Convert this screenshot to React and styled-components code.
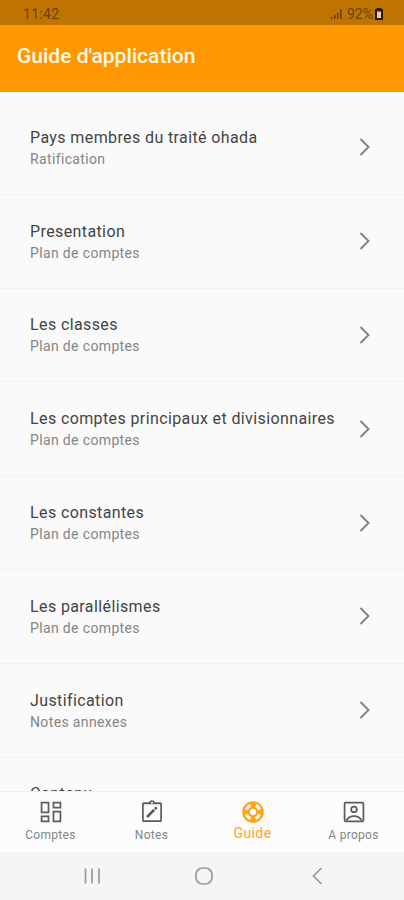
import styled, { createGlobalStyle } from 'styled-components'
import { MdOutlineSupport } from 'react-icons/md'

const topics = [
  { title: 'Pays membres du traité ohada', text: 'Ratification' },
  { title: 'Presentation', text: 'Plan de comptes' },
  { title: 'Les classes', text: 'Plan de comptes' },
  { title: 'Les comptes principaux et divisionnaires', text: 'Plan de comptes' },
  { title: 'Les constantes', text: 'Plan de comptes' },
  { title: 'Les parallélismes', text: 'Plan de comptes' },
  { title: 'Justification', text: 'Notes annexes' },
  { title: 'Contenu', text: 'Notes annexes' },
]

const BoardIcon = () => (
  <svg viewBox="0 0 24 24" fill="none" stroke="currentColor" strokeWidth="1.6">
    <path d="M3.300 3.300h6.400v9h-6.400zM14.300 3.300h6.400v4.700h-6.400zM3.300 16h6.400v4.700h-6.400zM14.300 11.700h6.400v9h-6.400z" />
  </svg>
)

const NotesIcon = () => (
  <svg viewBox="0 0 24 24" fill="currentColor">
    <path
      fillRule="evenodd"
      d="M19.500 3h-4.700a3 3 0 0 0-5.600 0H4.500A1.700 1.700 0 0 0 2.800 4.700v14.800a1.700 1.700 0 0 0 1.700 1.700h15a1.700 1.700 0 0 0 1.700-1.700V4.700A1.700 1.700 0 0 0 19.500 3zM12 2.500a.9.900 0 1 1 0 1.800.9.900 0 0 1 0-1.800zM4.400 4.800h15.200v14.800H4.400z"
    />
    <path d="M7 15.300V17h1.700l6.200-6.200-1.700-1.700zM16.800 8.900a.6.600 0 0 0 0-.8l-.9-.9a.6.600 0 0 0-.8 0l-1.200 1.200 1.700 1.700z" />
  </svg>
)

const AccountIcon = () => (
  <svg viewBox="0 0 24 24" fill="none" stroke="currentColor" strokeWidth="1.6">
    <rect x="3.300" y="3.300" width="17.400" height="17.400" rx="1" />
    <circle cx="12" cy="9.600" r="2.600" />
    <path d="M5 19.800c1.400-2.700 4-4 7-4s5.600 1.300 7 4" />
  </svg>
)

const tabs = [
  { label: 'Comptes', icon: <BoardIcon /> },
  { label: 'Notes', icon: <NotesIcon /> },
  { label: 'Guide', icon: <MdOutlineSupport />, active: true },
  { label: 'A propos', icon: <AccountIcon /> },
]

const App = () => {
  return (
    <Screen>
      <GlobalStyle />
      <StatusBar>
        <span>11:42</span>
        <Status>
          <svg width="12" height="12" viewBox="0 0 12 12" fill="currentColor">
            <path d="M0 9h1.500v2H0zM3 7h1.500v4H3zM6 4.500h1.500v6.500H6zM9 1h1.500v10H9z" />
          </svg>
          <span>92%</span>
          <svg width="8" height="12" viewBox="0 0 8 12">
            <path d="M2.500 1h3v1H7v9H1V2h1.500z" fill="#e5d0ae" stroke="#2b1a00" strokeWidth="2" />
            <path d="M2 1h4v2.500H2z" fill="#2b1a00" />
          </svg>
        </Status>
      </StatusBar>
      <Header>
        <h1>Guide d'application</h1>
      </Header>

      <TopicList>
        {topics.map((topic) => (
          <Topic key={topic.title}>
            <div className="info">
              <h3>{topic.title}</h3>
              <p>{topic.text}</p>
            </div>
            <svg width="12" height="18" viewBox="0 0 12 18" fill="none" stroke="#818181" strokeWidth="1.9">
              <path d="M1.500 1l8 8-8 8" />
            </svg>
          </Topic>
        ))}
      </TopicList>

      <TabBar>
        {tabs.map((tab) => (
          <Tab key={tab.label} $active={tab.active}>
            {tab.icon}
            <span>{tab.label}</span>
          </Tab>
        ))}
      </TabBar>

      <SystemNav>
        <svg width="18" height="18" viewBox="0 0 18 18">
          <path d="M1.500 1.500v15M8 1.500v15M15 1.500v15" />
        </svg>
        <svg width="18" height="18" viewBox="0 0 18 18">
          <rect x="1" y="1" width="16" height="16" rx="6.500" />
        </svg>
        <svg width="18" height="18" viewBox="0 0 18 18">
          <path d="M14.500 1L6.500 9l8 8" />
        </svg>
      </SystemNav>
    </Screen>
  )
}

export default App

const GlobalStyle = createGlobalStyle`
* {
  box-sizing: border-box;
}

body {
  margin: 0;
  font-family: Roboto, sans-serif;
}

h1, h3, p {
  margin: 0;
  font-weight: 400;
}

svg {
  display: block;
  flex-shrink: 0;
}
`

const Screen = styled.div`
display: flex;
flex-direction: column;
width: 100%;
height: 100vh;
overflow: hidden;
background: #fafafa;
`

const StatusBar = styled.div`
display: flex;
flex-shrink: 0;
justify-content: space-between;
height: 25px;
padding: 4px 21px 0 23px;
background: #bf7300;
color: #6b4205;
font-size: 14px;
line-height: 20px;
letter-spacing: 0.3px;
`

const Status = styled.div`
display: flex;
align-items: center;
gap: 4px;
height: 20px;
letter-spacing: 0;

span {
  margin-right: -2px;
}
`

const Header = styled.header`
display: flex;
flex-shrink: 0;
align-items: center;
height: 67px;
padding: 0 17px 6px;
background: #ff9800;

h1 {
  color: #fff8e8;
  font-size: 21px;
  font-weight: 500;
}
`

const TopicList = styled.main`
flex: 1;
min-height: 0;
padding-top: 9px;
overflow: hidden;
`

const Topic = styled.div`
display: flex;
align-items: center;
justify-content: space-between;
height: 93.8px;
padding: 0 33px 0 30px;
border-bottom: 1px solid #f2f2f2;

.info {
  padding-top: 2px;
}

h3 {
  color: #444;
  font-size: 16px;
  line-height: 22px;
  letter-spacing: 0.39px;
}

p {
  color: #858585;
  font-size: 14px;
  line-height: 21px;
  letter-spacing: 0.36px;
}
`

const TabBar = styled.nav`
display: flex;
flex-shrink: 0;
height: 61px;
border-top: 1px solid #eeeeee;
background: #fcfcfc;
`

const Tab = styled.div`
display: flex;
flex: 1;
flex-direction: column;
align-items: center;
padding-top: 7px;
color: ${({ $active }) => ($active ? '#ffa31a' : '#5c5c5c')};

svg {
  width: 26px;
  height: 26px;
}

span {
  color: ${({ $active }) => ($active ? '#ffa31a' : '#858585')};
  font-size: ${({ $active }) => ($active ? '14px' : '12px')};
  line-height: ${({ $active }) => ($active ? '17px' : '21px')};
  letter-spacing: ${({ $active }) => ($active ? '0.4px' : '0.3px')};
}
`

const SystemNav = styled.footer`
display: flex;
flex-shrink: 0;
align-items: center;
justify-content: space-around;
height: 48px;
padding: 0 32px 0 37px;
background: #f5f5f5;

svg {
  fill: none;
  stroke: #999;
  stroke-width: 1.7;
}
`
